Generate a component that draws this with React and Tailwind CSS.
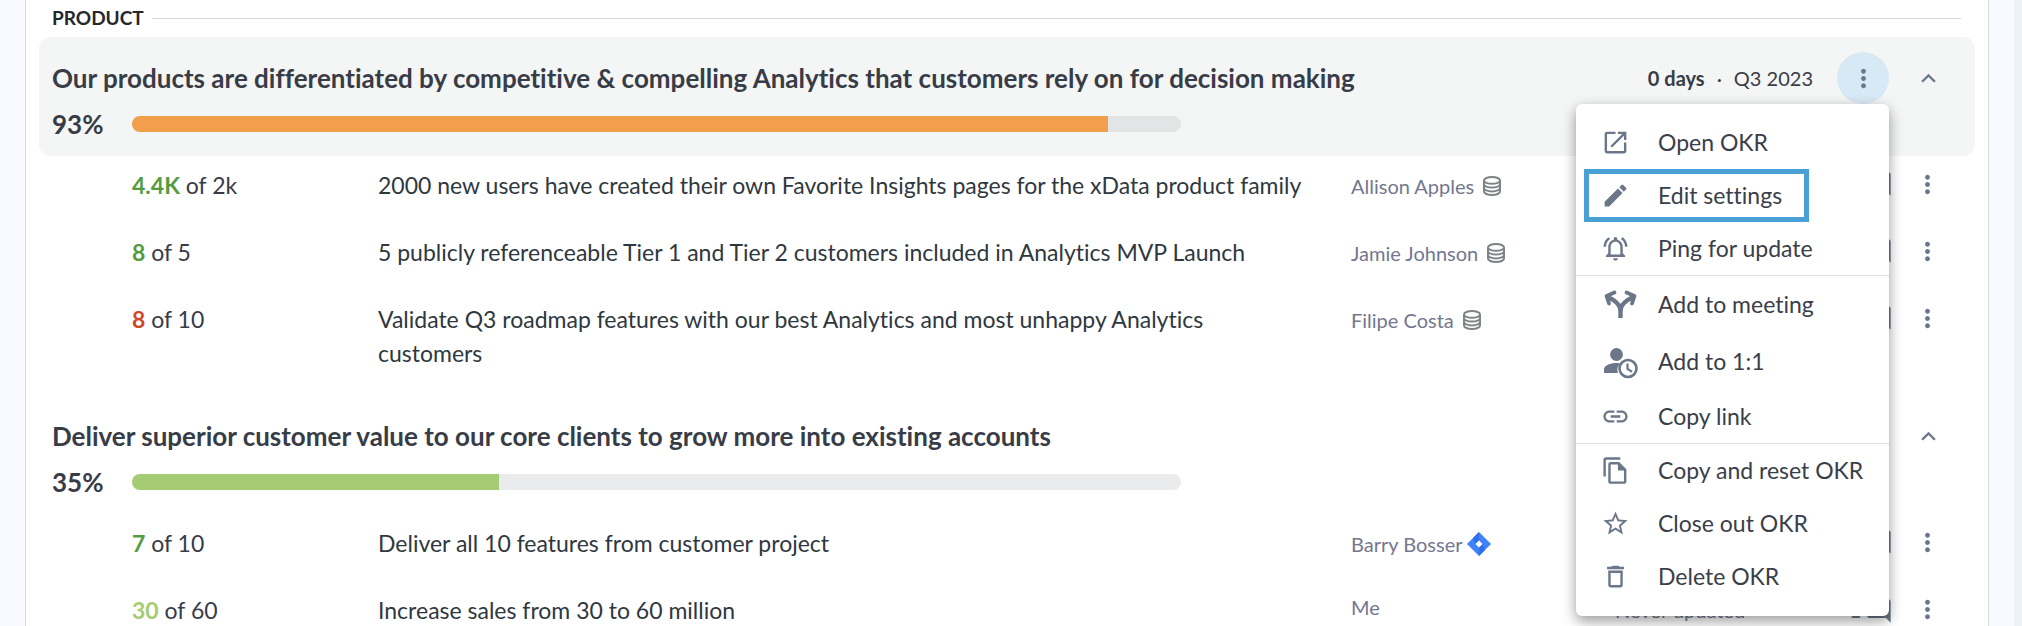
import {
  MdComment,
  MdDeleteOutline,
  MdEdit,
  MdExpandLess,
  MdLink,
  MdMoreVert,
  MdOpenInNew,
  MdOutlineFileCopy,
  MdOutlineNotificationsActive,
  MdStarBorder,
} from "react-icons/md";

const OBJECTIVES = [
  {
    title: "Our products are differentiated by competitive & compelling Analytics that customers rely on for decision making",
    progress: 93,
    card: "bg-[#f4f6f5]",
    track: "bg-[#e3e4e6]",
    fill: "bg-[#f29f4b]",
    age: "0 days",
    period: "Q3 2023",
    menuOpen: true,
    results: [
      { value: "4.4K", target: "2k", color: "text-[#529c41]", name: "2000 new users have created their own Favorite Insights pages for the xData product family", owner: "Allison Apples", source: "database" },
      { value: "8", target: "5", color: "text-[#529c41]", name: "5 publicly referenceable Tier 1 and Tier 2 customers included in Analytics MVP Launch", owner: "Jamie Johnson", source: "database" },
      { value: "8", target: "10", color: "text-[#d0472b]", name: "Validate Q3 roadmap features with our best Analytics and most unhappy Analytics customers", owner: "Filipe Costa", source: "database" },
    ],
  },
  {
    title: "Deliver superior customer value to our core clients to grow more into existing accounts",
    progress: 35,
    card: "bg-white",
    track: "bg-[#eaebed]",
    fill: "bg-[#a5cc74]",
    results: [
      { value: "7", target: "10", color: "text-[#529c41]", name: "Deliver all 10 features from customer project", owner: "Barry Bosser", source: "jira" },
      { value: "30", target: "60", color: "text-[#a5cc74]", name: "Increase sales from 30 to 60 million", owner: "Me", updated: "Never updated", comments: 1 },
    ],
  },
];

const MENU = [
  [
    { label: "Open OKR", icon: MdOpenInNew },
    { label: "Edit settings", icon: MdEdit, highlighted: true },
    { label: "Ping for update", icon: MdOutlineNotificationsActive },
  ],
  [
    { label: "Add to meeting", icon: ForkIcon, large: true },
    { label: "Add to 1:1", icon: UserClockIcon, large: true },
    { label: "Copy link", icon: MdLink },
  ],
  [
    { label: "Copy and reset OKR", icon: MdOutlineFileCopy },
    { label: "Close out OKR", icon: MdStarBorder },
    { label: "Delete OKR", icon: MdDeleteOutline },
  ],
];

function ForkIcon({ className }) {
  return (
    <svg viewBox="0 0 36 36" className={className} fill="none" stroke="currentColor" strokeLinejoin="round">
      <path d="M19.500 31v-7c0-6-5-10.500-13-14M19.500 24c0-6 5-10.500 13-14" strokeWidth="4.400" />
      <path d="M13.500 5.500 5.500 9 8 16.500M25.500 5.500l8 3.500-2.500 7.500" strokeWidth="3.800" strokeLinecap="round" />
    </svg>
  );
}

function UserClockIcon({ className }) {
  return (
    <svg viewBox="0 0 36 36" className={className} fill="none">
      <circle cx="15.500" cy="10.500" r="6.400" fill="currentColor" />
      <path d="M3 29v-3.500c0-4 6-6.500 12.500-6.500 1.500 0 2.500.1 3.500.3A10.500 10.500 0 0 0 16.800 29Z" fill="currentColor" />
      <circle cx="27" cy="24.500" r="8.500" stroke="currentColor" strokeWidth="2.600" />
      <path d="M26.500 19.500v5.500l4.500 2.800" stroke="currentColor" strokeWidth="2.200" />
    </svg>
  );
}

function DatabaseIcon() {
  return (
    <svg viewBox="0 0 20 20" className="ml-2 size-5" fill="none" stroke="#7d8485" strokeWidth="2" aria-label="Database">
      <ellipse cx="10" cy="4.400" rx="8" ry="3.400" />
      <path d="M2 4.400v11.200C2 17.500 5.600 19 10 19s8-1.500 8-3.400V4.400M2 8.200c0 1.900 3.600 3.400 8 3.400s8-1.500 8-3.400M2 12c0 1.900 3.600 3.400 8 3.400s8-1.500 8-3.400" />
    </svg>
  );
}

function JiraIcon() {
  return (
    <svg viewBox="0 0 24 24" className="ml-1 size-6" aria-label="Jira">
      <path d="M12 0 24 12 12 24 0 12Z" fill="#3f83fb" />
      <path d="M12 0v8.500L8.500 12 6 6Z" fill="#2f6fe6" />
      <path d="M12 24v-8.500l3.500-3.500L18 18Z" fill="#2f6fe6" />
      <path d="m12 8.500 3.500 3.500-3.500 3.500L8.500 12Z" fill="#fff" />
    </svg>
  );
}

function ContextMenu() {
  return (
    <div
      role="menu"
      className="absolute right-0 top-full z-10 w-[313px] rounded-md bg-white pb-[13px] pt-3 shadow-[0_5px_14px_rgba(0,0,0,0.4)]"
    >
      {MENU.map((group, i) => (
        <div key={i} className="border-t border-[#dcdddf] first:border-t-0">
          {group.map(({ label, icon: Icon, large, highlighted }) => (
            <button
              key={label}
              role="menuitem"
              className={`relative flex w-full items-center pl-[25px] text-left text-[23px] text-[#3a3e49] ${large ? "h-[57px]" : "h-[53px]"}`}
            >
              <span className="w-[57px] text-[#6b7788]">
                <Icon className={large ? "size-9 overflow-visible" : "size-[29px]"} />
              </span>
              {label}
              {highlighted && <span className="absolute inset-y-0 left-2 w-[225px] border-5 border-[#48a0d4]" />}
            </button>
          ))}
        </div>
      ))}
    </div>
  );
}

function ObjectiveHeader({ objective }) {
  const { title, progress, card, track, fill, age, period, menuOpen } = objective;
  return (
    <header className={`rounded-xl pb-4 pl-[13px] pr-[21px] pt-[15px] ${card}`}>
      <div className="flex h-[52px] items-center">
        <h2 className="flex-1 text-[26px] font-bold leading-8">{title}</h2>
        {period && (
          <p className="mr-6 flex gap-3 text-[20px] leading-6">
            <b>{age}</b>
            <span>·</span>
            <span>{period}</span>
          </p>
        )}
        {menuOpen && (
          <div className="relative mr-[13px]">
            <button aria-label="More actions" className="flex size-[52px] items-center justify-center rounded-full bg-[#d8e9f6] text-[#6b7788]">
              <MdMoreVert className="size-[29px]" />
            </button>
            <ContextMenu />
          </div>
        )}
        <button aria-label="Collapse" className="flex size-[52px] items-center justify-center text-[#6b7788]">
          <MdExpandLess className="size-[29px]" />
        </button>
      </div>
      <div className="mt-1 grid h-8 grid-cols-[80px_1049fr_773fr] items-center">
        <span className="text-[26px] font-bold leading-8">{progress}%</span>
        <div className={`h-4 overflow-hidden rounded-full ${track}`}>
          <div className={`h-full ${fill}`} style={{ width: `${progress}%` }} />
        </div>
      </div>
    </header>
  );
}

function KeyResult({ result }) {
  const { value, target, color, name, owner, source, updated, comments } = result;
  return (
    <li className="flex items-start pb-[19px] pl-[93px] pr-[22px] pt-3 text-[23px] leading-[34px]">
      <p className="w-[246px]">
        <b className={color}>{value}</b> of {target}
      </p>
      <p className="flex-1 pb-0.5 pr-11 text-[#2f3840]">{name}</p>
      <p className={`flex w-[264px] items-center text-[20px] text-[#73778f] ${source ? "h-9" : "h-7"}`}>
        {owner}
        {source === "database" && <DatabaseIcon />}
        {source === "jira" && <JiraIcon />}
      </p>
      <p className="w-[234px] text-[20px] text-[#73778f]">{updated}</p>
      <div className="flex w-11 items-center justify-end gap-1 text-[20px] text-[#6b7788]">
        {comments && <b>{comments}</b>}
        <MdComment className="mt-0.5 size-7 shrink-0" />
      </div>
      <button aria-label="More actions" className="ml-2 flex h-8 w-[52px] items-center justify-center text-[#6b7788]">
        <MdMoreVert className="size-[29px]" />
      </button>
    </li>
  );
}

export default function App() {
  return (
    <div className="h-screen overflow-hidden border-r-8 border-[#ebf1f6] bg-[#f8faff] px-[25px] font-['Lato',sans-serif] text-[#383c47] [font-variant-ligatures:none]">
      <main className="h-full border-x border-[#d6dbe2] bg-white px-[13px]">
        <div className="flex h-[37px] items-center gap-2 pl-[13px] pr-[14px]">
          <h1 className="text-[19px] font-bold text-[#25272b]">PRODUCT</h1>
          <span className="h-px flex-1 bg-[#d3dae1]" />
        </div>
        {OBJECTIVES.map((objective) => (
          <section key={objective.title} className="mb-1">
            <ObjectiveHeader objective={objective} />
            <ul>
              {objective.results.map((result) => (
                <KeyResult key={result.name} result={result} />
              ))}
            </ul>
          </section>
        ))}
      </main>
    </div>
  );
}
